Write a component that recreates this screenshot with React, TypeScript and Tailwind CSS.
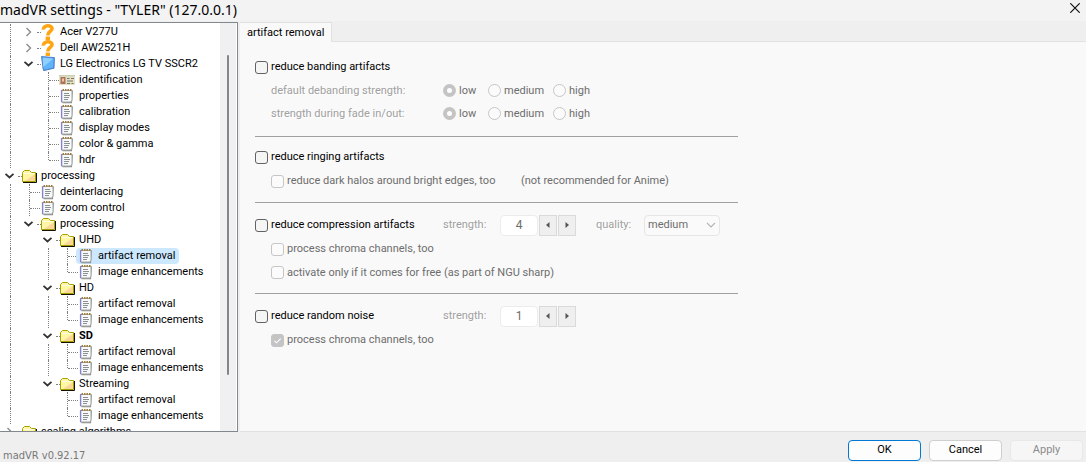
import { useId, useState } from "react";
import type { ReactNode } from "react";

type IconName = "unknown" | "monitor" | "card" | "page" | "folder";

interface TreeItem {
  id: string;
  label: string;
  icon: IconName;
  bold?: boolean;
  children?: TreeItem[];
}

const effects = (prefix: string): TreeItem[] => [
  { id: `${prefix}-artifact`, label: "artifact removal", icon: "page" },
  { id: `${prefix}-image`, label: "image enhancements", icon: "page" },
];

const displays: TreeItem[] = [
  { id: "acer", label: "Acer V277U", icon: "unknown", children: [] },
  { id: "dell", label: "Dell AW2521H", icon: "unknown", children: [] },
  {
    id: "lg",
    label: "LG Electronics LG TV SSCR2",
    icon: "monitor",
    children: [
      { id: "identification", label: "identification", icon: "card" },
      { id: "properties", label: "properties", icon: "page" },
      { id: "calibration", label: "calibration", icon: "page" },
      { id: "modes", label: "display modes", icon: "page" },
      { id: "gamma", label: "color & gamma", icon: "page" },
      { id: "hdr", label: "hdr", icon: "page" },
    ],
  },
];

const categories: TreeItem[] = [
  {
    id: "processing",
    label: "processing",
    icon: "folder",
    children: [
      { id: "deinterlacing", label: "deinterlacing", icon: "page" },
      { id: "zoom", label: "zoom control", icon: "page" },
      {
        id: "profiles",
        label: "processing",
        icon: "folder",
        children: [
          { id: "uhd", label: "UHD", icon: "folder", children: effects("uhd") },
          { id: "hd", label: "HD", icon: "folder", children: effects("hd") },
          { id: "sd", label: "SD", icon: "folder", bold: true, children: effects("sd") },
          { id: "streaming", label: "Streaming", icon: "folder", children: effects("streaming") },
        ],
      },
    ],
  },
  { id: "scaling", label: "scaling algorithms", icon: "folder", children: [] },
];

function Icon({ name }: { name: IconName }) {
  return (
    <svg viewBox="0 0 16 16" className="size-4 shrink-0" aria-hidden="true">
      {name === "unknown" && (
        <>
          <path d="M3.4 5.6C3 0.8 12.4 0.6 12 4.8C11.8 7.4 7.8 7.2 7.8 11.4" fill="none" stroke="#ffa511" strokeWidth="3.6" />
          <rect x="5.6" y="12.6" width="4.4" height="3.4" fill="#ffa511" />
        </>
      )}
      {name === "monitor" && (
        <>
          <path d="M1.2 0.4L3 1.4L6.4 15.4L2.4 12.4Z" fill="#b9c0c8" />
          <path d="M1.6 0.6L14.4 1.6L14 12.2L3.6 14.6Z" fill="#4a9ae8" stroke="#4c7fd0" strokeWidth="1" />
          <path d="M2.6 1.6L13.4 2.4L8 9L3.2 11Z" fill="#8fd0ff" />
          <path d="M3.2 11L13.4 2.4L13.1 11.4L4.3 13.4Z" fill="#62b4fa" />
        </>
      )}
      {name === "card" && (
        <>
          <rect x="0" y="3" width="16" height="10" fill="#e6dfc4" />
          <rect x="0" y="3" width="16" height="1.5" fill="#c9d3b8" />
          <rect x="1.5" y="5" width="5" height="7" fill="#a8745c" />
          <rect x="3" y="6.5" width="2" height="3" fill="#f0c4a4" />
          <path d="M8 6.5H10.5M12 6.5H15M8 9H14M8 11.5H11M12.5 11.5H14.5" stroke="#6d7b68" strokeWidth="1.2" />
        </>
      )}
      {name === "page" && (
        <>
          <path d="M3.5 2.5H14L13 15.2H3.5Z" fill="#8a8a88" />
          <path d="M2.5 2.5H13V12L12 14H2.5Z" fill="#f7f8f8" stroke="#a3a9a9" strokeWidth="1" />
          <path d="M2.6 2V14.2" stroke="#8583cc" strokeWidth="1.4" />
          <path d="M3.5 1H5V3H3.5ZM6 1H7.5V3H6ZM8.5 1H10V3H8.5ZM11 1H12.5V3H11Z" fill="#a07a3e" />
          <path d="M5 5.5H10M5 7.5H11M5 9.5H10M5 11.5H9" stroke="#8b9193" strokeWidth="1" />
        </>
      )}
      {name === "folder" && (
        <>
          <path d="M2 14.5H15.5V5" fill="none" stroke="#111100" strokeWidth="1" />
          <path d="M1.5 13.5V4.5L3.5 2.5H8.5L10.5 4.5H14.5V13.5Z" fill="#fff7a6" stroke="#a3a000" strokeWidth="1" />
          <path d="M14 6V13H4Z" fill="#fbd69a" />
          <path d="M2.5 5.5H13.5" stroke="#fffde0" strokeWidth="1" />
        </>
      )}
    </svg>
  );
}

function Chevron({ open }: { open: boolean }) {
  return (
    <svg viewBox="0 0 11 16" className="h-4 w-[11px]" aria-hidden="true">
      {open ? (
        <path d="M1.5 5.8L5.5 9.5L9.5 5.8" fill="none" stroke="#333333" strokeWidth="1.8" />
      ) : (
        <path d="M3.5 4L7.5 8L3.5 12" fill="none" stroke="#8c8c8c" strokeWidth="1.4" />
      )}
    </svg>
  );
}

interface BranchProps {
  items: TreeItem[];
  guides: boolean[];
  continues?: boolean;
  closed: string[];
  selected: string;
  onToggle: (id: string) => void;
  onSelect: (id: string) => void;
}

function Branch({ items, guides, continues = false, closed, selected, onToggle, onSelect }: BranchProps) {
  return (
    <ul role="group">
      {items.map((item, index) => {
        const last = index === items.length - 1 && !continues;
        const parent = item.children !== undefined;
        const open = parent && item.children!.length > 0 && !closed.includes(item.id);
        const followed = index < items.length - 1;
        return (
          <li key={item.id} role="treeitem" aria-expanded={parent ? open : undefined}>
            <div className="flex h-4">
              {guides.map((line, level) => (
                <span key={level} className="flex w-[19px] shrink-0 pl-2.5">
                  {line && <span className="border-l border-dotted border-[#808080]" />}
                </span>
              ))}
              {parent ? (
                <span className="flex w-[19px] shrink-0 items-center pl-1">
                  <button type="button" aria-label={`Toggle ${item.label}`} onClick={() => onToggle(item.id)}>
                    <Chevron open={open} />
                  </button>
                  <span className="ml-[3px] w-1 shrink-0 border-t border-dotted border-[#808080]" />
                </span>
              ) : (
                <span className="flex w-[19px] shrink-0 pl-2.5">
                  <span className={`${last ? "h-2" : "h-4"} border-l border-dotted border-[#808080]`} />
                  <span className="mt-2 w-2.5 shrink-0 border-t border-dotted border-[#808080]" />
                </span>
              )}
              <button
                type="button"
                onClick={() => onSelect(item.id)}
                className={`flex items-center gap-1 rounded-sm pr-1 pl-0.5 whitespace-nowrap ${
                  selected === item.id ? "bg-[#cce8ff]" : ""
                } ${item.bold ? "font-bold" : ""}`}
              >
                <Icon name={item.icon} />
                <span>{item.label}</span>
              </button>
            </div>
            {open && (
              <Branch
                items={item.children!}
                guides={[...guides, followed]}
                closed={closed}
                selected={selected}
                onToggle={onToggle}
                onSelect={onSelect}
              />
            )}
          </li>
        );
      })}
    </ul>
  );
}

function SettingsTree() {
  const [closed, setClosed] = useState<string[]>([]);
  const [selected, setSelected] = useState("uhd-artifact");
  const toggle = (id: string) =>
    setClosed((ids) => (ids.includes(id) ? ids.filter((other) => other !== id) : [...ids, id]));
  const shared = { closed, selected, onToggle: toggle, onSelect: setSelected };
  return (
    <nav
      aria-label="Settings"
      className="flex w-[238px] shrink-0 overflow-hidden border-t border-r border-b border-[#828790] bg-white pr-px"
    >
      <div role="tree" className="min-w-0 flex-1 overflow-hidden pt-px">
        <Branch items={displays} guides={[true]} {...shared} />
        <Branch items={categories} guides={[]} continues {...shared} />
      </div>
      <div className="flex w-4 shrink-0 flex-col items-center bg-[#f0f0f0] pt-8 pb-14">
        <div className="w-0.5 flex-1 rounded-full bg-[#858585]" />
      </div>
    </nav>
  );
}

function Check({
  label,
  disabled = false,
  defaultChecked = false,
}: {
  label: string;
  disabled?: boolean;
  defaultChecked?: boolean;
}) {
  return (
    <label className={`flex items-center gap-[3px] whitespace-nowrap ${disabled ? "text-[#6d6d6d]" : "text-black"}`}>
      <span className="grid">
        <input
          type="checkbox"
          disabled={disabled}
          defaultChecked={defaultChecked}
          className="peer col-start-1 row-start-1 size-[13px] appearance-none rounded-[3px] border border-[#626262] bg-[#f5f5f5] checked:border-[#0067c0] checked:bg-[#0067c0] disabled:border-[#c6c6c6] disabled:bg-[#fbfbfb] disabled:checked:border-[#c4c4c4] disabled:checked:bg-[#c4c4c4]"
        />
        <svg
          viewBox="0 0 13 13"
          className="pointer-events-none invisible col-start-1 row-start-1 size-[13px] peer-checked:visible"
          aria-hidden="true"
        >
          <path d="M3.5 6.8L5.5 8.8L9.7 4.6" fill="none" stroke="#ffffff" strokeWidth="1.1" />
        </svg>
      </span>
      {label}
    </label>
  );
}

function Caption({ children, htmlFor }: { children: ReactNode; htmlFor?: string }) {
  return (
    <label htmlFor={htmlFor} className="whitespace-nowrap text-[#a0a0a0] [text-shadow:1px_1px_0_#ffffff]">
      {children}
    </label>
  );
}

function Strengths({ legend }: { legend: string }) {
  const name = useId();
  return (
    <fieldset className="grid h-[23px] grid-cols-[172px_45px_65px_1fr] items-center pl-4">
      <legend className="contents">
        <Caption>{legend}</Caption>
      </legend>
      {["low", "medium", "high"].map((value) => (
        <label key={value} className="flex items-center gap-[3px] whitespace-nowrap text-[#6d6d6d]">
          <input
            type="radio"
            name={name}
            disabled
            defaultChecked={value === "low"}
            className="size-[13px] appearance-none rounded-full border border-[#c6c6c6] bg-[#fbfbfb] checked:border-4 checked:border-[#c4c4c4] checked:bg-white"
          />
          {value}
        </label>
      ))}
    </fieldset>
  );
}

function Spinner({ value }: { value: string }) {
  const id = useId();
  return (
    <div className="flex items-center">
      <span className="w-[57px]">
        <Caption htmlFor={id}>strength:</Caption>
      </span>
      <input
        id={id}
        disabled
        defaultValue={value}
        className="h-[21px] w-[38px] rounded-sm border border-[#ececec] bg-white text-center text-[12px] text-[#6d6d6d]"
      />
      {["M6.5 2V8L3 5Z", "M3.5 2V8L7 5Z"].map((d, index) => (
        <button
          key={d}
          type="button"
          disabled
          aria-label={index === 0 ? "Decrease strength" : "Increase strength"}
          className="ml-px flex h-[21px] w-[18px] items-center justify-center border border-[#dadada] bg-[#efefef]"
        >
          <svg viewBox="0 0 10 10" className="size-2.5" aria-hidden="true">
            <path d={d} fill="#555555" />
          </svg>
        </button>
      ))}
    </div>
  );
}

function Quality() {
  const id = useId();
  return (
    <div className="ml-5 flex items-center">
      <span className="w-12">
        <Caption htmlFor={id}>quality:</Caption>
      </span>
      <span className="grid items-center">
        <select
          id={id}
          disabled
          defaultValue="medium"
          className="col-start-1 row-start-1 h-[21px] w-[76px] appearance-none rounded-sm border border-[#e6e6e6] bg-[#fafafa] pl-[3px] text-[#6d6d6d] opacity-100"
        >
          <option>low</option>
          <option>medium</option>
          <option>high</option>
        </select>
        <svg
          viewBox="0 0 10 6"
          className="pointer-events-none col-start-1 row-start-1 mr-1 h-1.5 w-2.5 justify-self-end"
          aria-hidden="true"
        >
          <path d="M1 1L5 5L9 1" fill="none" stroke="#b4b4b4" strokeWidth="1.1" />
        </svg>
      </span>
    </div>
  );
}

function SettingsForm() {
  return (
    <form className="mx-[15px] max-w-[483px] pt-3">
      <section className="border-b border-[#a0a0a0] pb-[11px]">
        <div className="flex h-6 items-center">
          <Check label="reduce banding artifacts" />
        </div>
        <Strengths legend="default debanding strength:" />
        <Strengths legend="strength during fade in/out:" />
      </section>
      <section className="border-b border-[#a0a0a0] pt-2 pb-[9px]">
        <div className="flex h-6 items-center">
          <Check label="reduce ringing artifacts" />
        </div>
        <div className="grid h-6 grid-cols-[250px_1fr] items-center pl-4">
          <Check label="reduce dark halos around bright edges, too" disabled />
          <span className="whitespace-nowrap text-[#6d6d6d]">(not recommended for Anime)</span>
        </div>
      </section>
      <section className="border-b border-[#a0a0a0] pt-2.5 pb-[9px]">
        <div className="grid h-6 grid-cols-[188px_auto_1fr] items-center">
          <Check label="reduce compression artifacts" />
          <Spinner value="4" />
          <Quality />
        </div>
        <div className="flex h-6 items-center pl-4">
          <Check label="process chroma channels, too" disabled />
        </div>
        <div className="flex h-[23px] items-center pl-4">
          <Check label="activate only if it comes for free (as part of NGU sharp)" disabled />
        </div>
      </section>
      <section className="pt-2.5">
        <div className="grid h-6 grid-cols-[188px_1fr] items-center">
          <Check label="reduce random noise" />
          <Spinner value="1" />
        </div>
        <div className="flex h-6 items-center pl-4">
          <Check label="process chroma channels, too" disabled defaultChecked />
        </div>
      </section>
    </form>
  );
}

export default function App() {
  return (
    <div className="flex h-screen flex-col overflow-hidden bg-[#efefef] font-[Roboto,'Liberation_Sans',sans-serif] text-[11px] leading-4 text-black">
      <header className="flex h-[21px] shrink-0 items-start justify-between bg-[#f3f3f3] pr-1.5">
        <h1 className="font-['Noto_Sans',sans-serif] text-[14px] leading-[19px] whitespace-nowrap">
          madVR settings - &quot;TYLER&quot; (127.0.0.1)
        </h1>
        <button type="button" aria-label="Close" className="pt-[3px]">
          <svg viewBox="0 0 10 10" className="size-2.5" aria-hidden="true">
            <path d="M0.3 0.3L9.7 9.7M9.7 0.3L0.3 9.7" stroke="#111111" strokeWidth="1.2" />
          </svg>
        </button>
      </header>
      <div className="flex min-h-0 flex-1 gap-0.5 pt-px">
        <SettingsTree />
        <main className="flex min-w-0 flex-1 flex-col">
          <div role="tablist" className="flex h-5 shrink-0">
            <button
              type="button"
              role="tab"
              aria-selected="true"
              className="border-t border-r border-[#e2e2e2] bg-[#f9f9f9] pr-[7px] pl-[7px]"
            >
              artifact removal
            </button>
            <span className="flex-1 border-b border-[#e2e2e2]" />
          </div>
          <div role="tabpanel" className="min-h-0 flex-1 border-b border-[#e2e2e2] bg-[#f9f9f9] pt-px">
            <SettingsForm />
          </div>
        </main>
      </div>
      <footer className="flex h-[30px] shrink-0 items-center justify-between pr-[3px] pl-[3px]">
        <span className="self-end font-['DejaVu_Sans_Condensed','DejaVu_Sans',sans-serif] leading-3 text-[#777777]">
          madVR v0.92.17
        </span>
        <div className="flex gap-2 pt-1.5">
          <button type="button" className="h-[21px] w-[73px] rounded-[4px] border border-[#0078d4] bg-[#fdfdfd]">
            OK
          </button>
          <button type="button" className="h-[21px] w-[73px] rounded-[4px] border border-[#cfcfcf] bg-[#fdfdfd]">
            Cancel
          </button>
          <button
            type="button"
            disabled
            className="h-[21px] w-[73px] rounded-[4px] border border-[#e8e8e8] bg-[#f6f6f6] text-[#8b8b8b]"
          >
            Apply
          </button>
        </div>
      </footer>
    </div>
  );
}
